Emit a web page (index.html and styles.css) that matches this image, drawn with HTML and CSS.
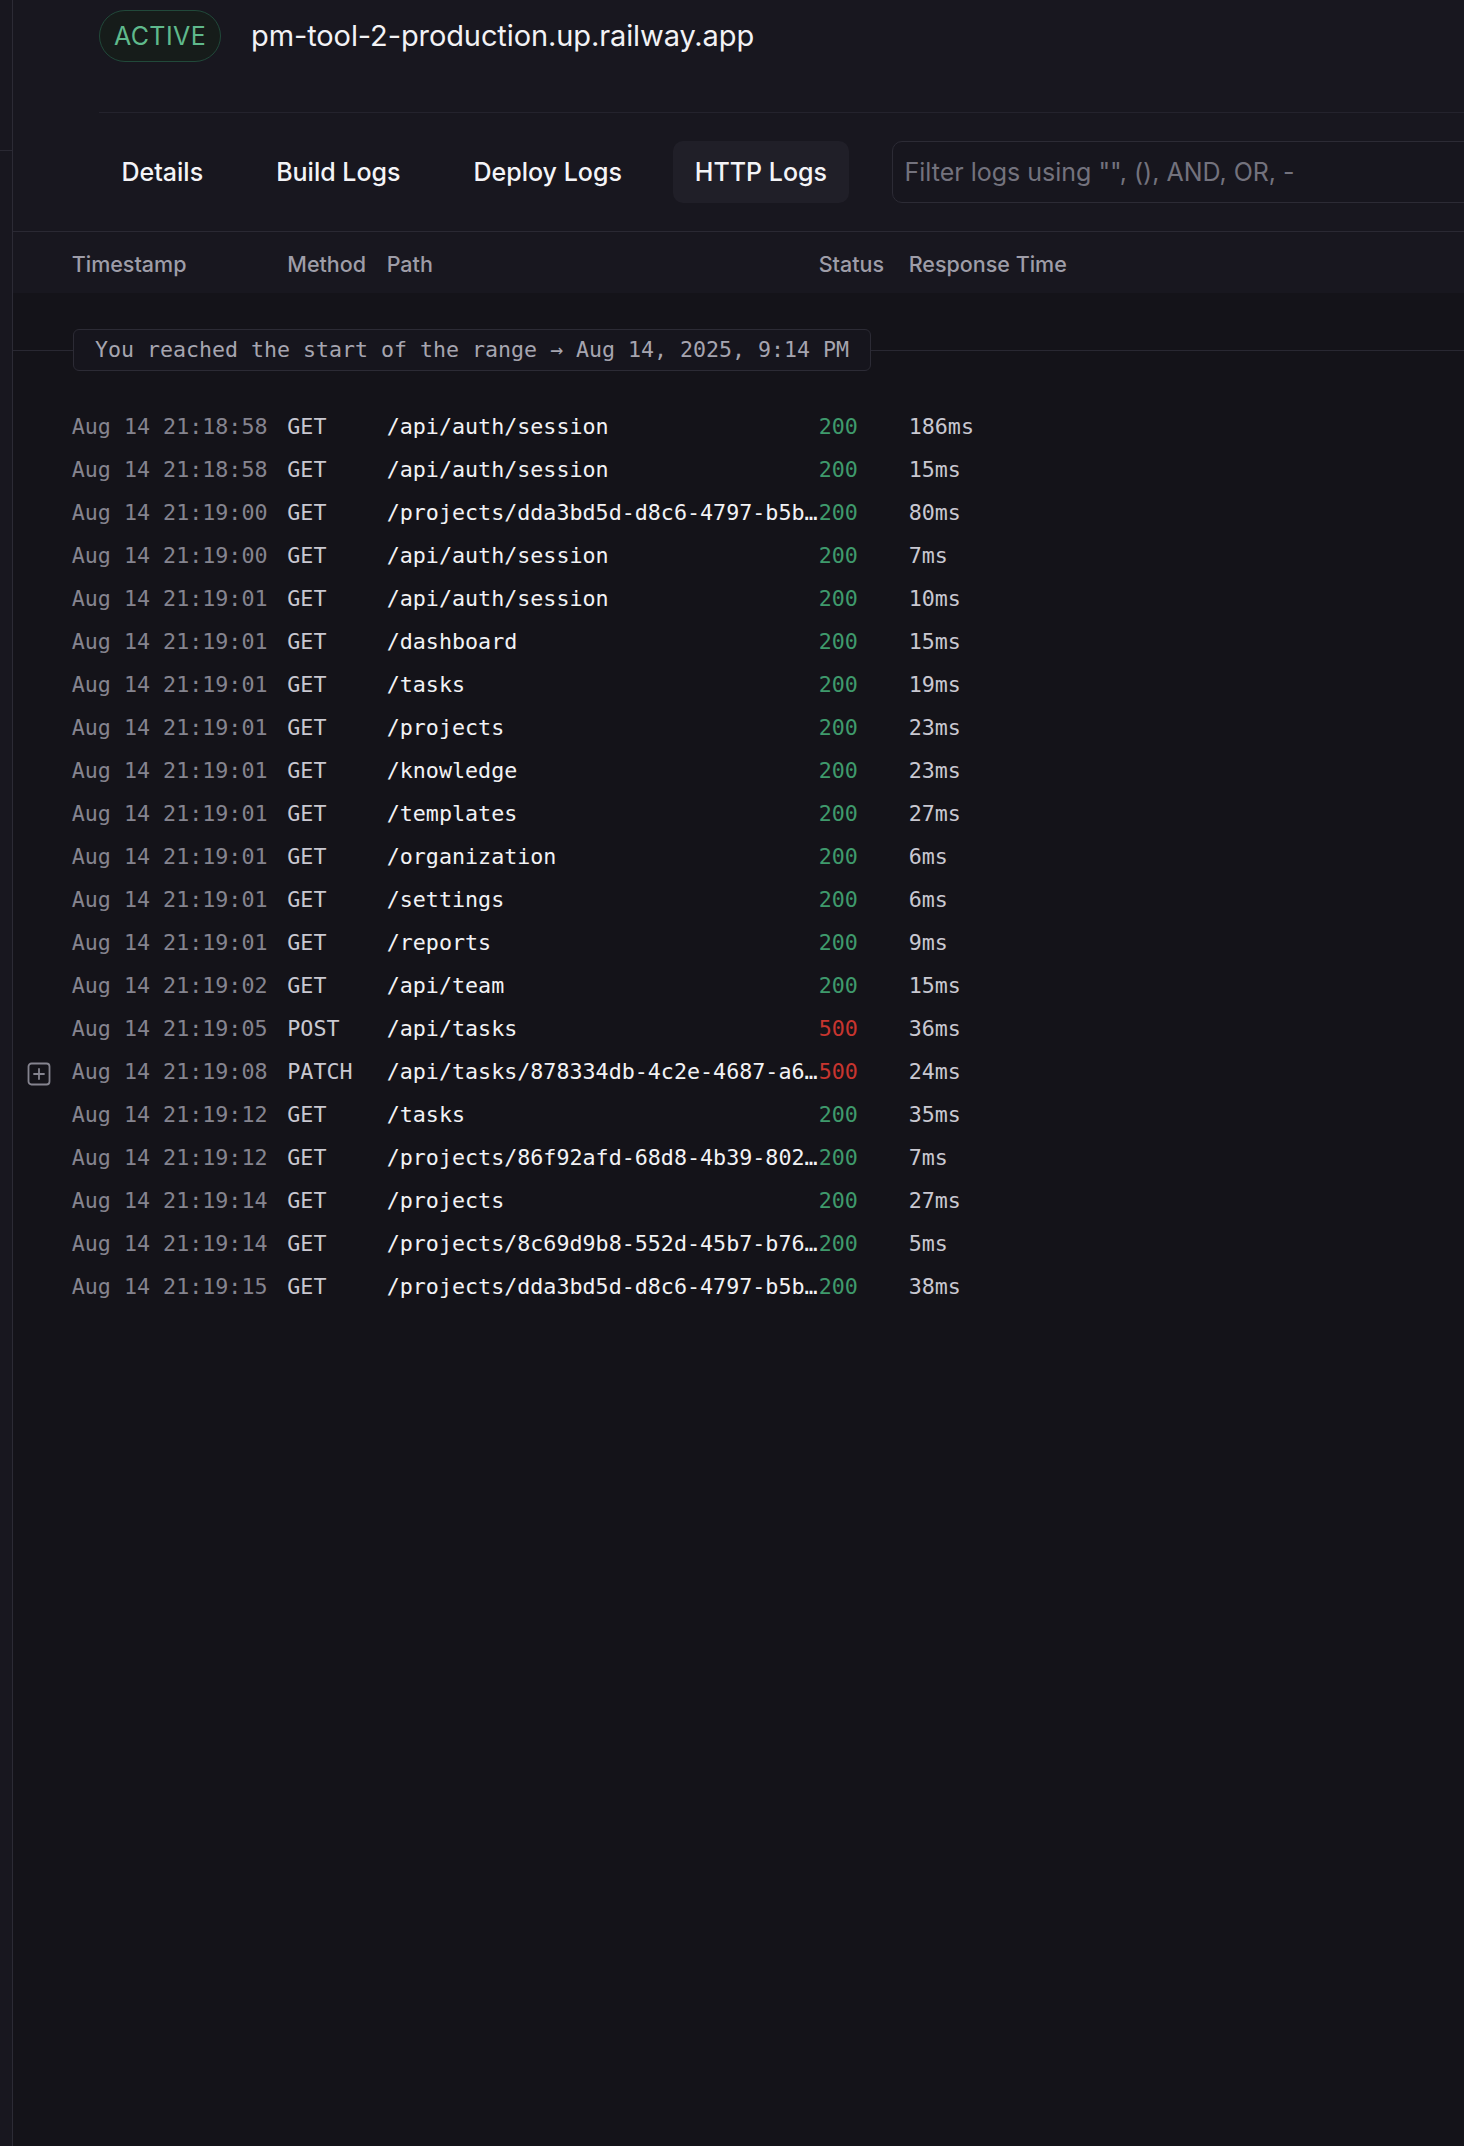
FILE: index.html
```html
<!DOCTYPE html>
<html lang="en">
<head>
<meta charset="utf-8">
<title>HTTP Logs</title>
<link rel="stylesheet" href="styles.css">
</head>
<body>
<div class="app">
  <aside class="side"><div class="side-item"></div></aside>
  <main class="panel">
    <header class="top">
      <div class="domain-row">
        <span class="pill">ACTIVE</span>
        <span class="domain">pm-tool-2-production.up.railway.app</span>
      </div>
      <nav class="tabs-row">
        <span class="tab">Details</span>
        <span class="tab">Build Logs</span>
        <span class="tab">Deploy Logs</span>
        <span class="tab active">HTTP Logs</span>
        <input class="filter" type="text" placeholder="Filter logs using &quot;&quot;, (), AND, OR, -">
      </nav>
    </header>
    <section class="logs">
      <div class="log-head grid">
        <span></span>
        <span>Timestamp</span>
        <span>Method</span>
        <span>Path</span>
        <span>Status</span>
        <span>Response Time</span>
      </div>
      <div class="range">
        <span class="range-line short"></span>
        <span class="range-box">You reached the start of the range → Aug 14, 2025, 9:14 PM</span>
        <span class="range-line"></span>
      </div>
      <div class="rows">
        <div class="row grid"><span></span><span class="ts">Aug 14 21:18:58</span><span class="m">GET</span><span class="p">/api/auth/session</span><span class="s ok">200</span><span class="r">186ms</span></div>
        <div class="row grid"><span></span><span class="ts">Aug 14 21:18:58</span><span class="m">GET</span><span class="p">/api/auth/session</span><span class="s ok">200</span><span class="r">15ms</span></div>
        <div class="row grid"><span></span><span class="ts">Aug 14 21:19:00</span><span class="m">GET</span><span class="p">/projects/dda3bd5d-d8c6-4797-b5b1-6a2c9e0f4d71</span><span class="s ok">200</span><span class="r">80ms</span></div>
        <div class="row grid"><span></span><span class="ts">Aug 14 21:19:00</span><span class="m">GET</span><span class="p">/api/auth/session</span><span class="s ok">200</span><span class="r">7ms</span></div>
        <div class="row grid"><span></span><span class="ts">Aug 14 21:19:01</span><span class="m">GET</span><span class="p">/api/auth/session</span><span class="s ok">200</span><span class="r">10ms</span></div>
        <div class="row grid"><span></span><span class="ts">Aug 14 21:19:01</span><span class="m">GET</span><span class="p">/dashboard</span><span class="s ok">200</span><span class="r">15ms</span></div>
        <div class="row grid"><span></span><span class="ts">Aug 14 21:19:01</span><span class="m">GET</span><span class="p">/tasks</span><span class="s ok">200</span><span class="r">19ms</span></div>
        <div class="row grid"><span></span><span class="ts">Aug 14 21:19:01</span><span class="m">GET</span><span class="p">/projects</span><span class="s ok">200</span><span class="r">23ms</span></div>
        <div class="row grid"><span></span><span class="ts">Aug 14 21:19:01</span><span class="m">GET</span><span class="p">/knowledge</span><span class="s ok">200</span><span class="r">23ms</span></div>
        <div class="row grid"><span></span><span class="ts">Aug 14 21:19:01</span><span class="m">GET</span><span class="p">/templates</span><span class="s ok">200</span><span class="r">27ms</span></div>
        <div class="row grid"><span></span><span class="ts">Aug 14 21:19:01</span><span class="m">GET</span><span class="p">/organization</span><span class="s ok">200</span><span class="r">6ms</span></div>
        <div class="row grid"><span></span><span class="ts">Aug 14 21:19:01</span><span class="m">GET</span><span class="p">/settings</span><span class="s ok">200</span><span class="r">6ms</span></div>
        <div class="row grid"><span></span><span class="ts">Aug 14 21:19:01</span><span class="m">GET</span><span class="p">/reports</span><span class="s ok">200</span><span class="r">9ms</span></div>
        <div class="row grid"><span></span><span class="ts">Aug 14 21:19:02</span><span class="m">GET</span><span class="p">/api/team</span><span class="s ok">200</span><span class="r">15ms</span></div>
        <div class="row grid"><span></span><span class="ts">Aug 14 21:19:05</span><span class="m">POST</span><span class="p">/api/tasks</span><span class="s err">500</span><span class="r">36ms</span></div>
        <div class="row grid"><span class="exp"><svg width="24" height="24" viewBox="0 0 24 24" fill="none" stroke="#85848f" stroke-width="1.8" stroke-linecap="round"><rect x="1.5" y="1.5" width="21" height="21" rx="3"/><path d="M12 7v10M7 12h10"/></svg></span><span class="ts">Aug 14 21:19:08</span><span class="m">PATCH</span><span class="p">/api/tasks/878334db-4c2e-4687-a6d2-91b3f0c5e8a4</span><span class="s err">500</span><span class="r">24ms</span></div>
        <div class="row grid"><span></span><span class="ts">Aug 14 21:19:12</span><span class="m">GET</span><span class="p">/tasks</span><span class="s ok">200</span><span class="r">35ms</span></div>
        <div class="row grid"><span></span><span class="ts">Aug 14 21:19:12</span><span class="m">GET</span><span class="p">/projects/86f92afd-68d8-4b39-8021-c4e7a9d3b615</span><span class="s ok">200</span><span class="r">7ms</span></div>
        <div class="row grid"><span></span><span class="ts">Aug 14 21:19:14</span><span class="m">GET</span><span class="p">/projects</span><span class="s ok">200</span><span class="r">27ms</span></div>
        <div class="row grid"><span></span><span class="ts">Aug 14 21:19:14</span><span class="m">GET</span><span class="p">/projects/8c69d9b8-552d-45b7-b76e-0d4f2a8c9b31</span><span class="s ok">200</span><span class="r">5ms</span></div>
        <div class="row grid"><span></span><span class="ts">Aug 14 21:19:15</span><span class="m">GET</span><span class="p">/projects/dda3bd5d-d8c6-4797-b5b1-6a2c9e0f4d71</span><span class="s ok">200</span><span class="r">38ms</span></div>
      </div>
    </section>
  </main>
</div>
</body>
</html>
```

FILE: styles.css
```css
* { box-sizing: border-box; }
html, body {
  margin: 0;
  padding: 0;
  height: 100%;
  background: #141319;
  overflow: hidden;
}
body {
  font-family: Inter, "Noto Sans", sans-serif;
  color: #f2f2f5;
}
.app {
  display: flex;
  min-height: 2146px;
  width: 1464px;
  overflow: hidden;
}
.side {
  width: 12px;
  flex: 0 0 12px;
  background: #18171f;
}
.side-item {
  height: 151px;
  border-bottom: 1px solid #2a2933;
}
.panel {
  flex: 1 1 auto;
  min-width: 0;
  border-left: 1px solid #2c2b35;
  background: #141319;
  display: flex;
  flex-direction: column;
}
.top {
  background: #18171f;
}
.domain-row {
  margin-left: 86px;
  height: 113px;
  padding-top: 10px;
  border-bottom: 1px solid #24232d;
  display: flex;
  align-items: flex-start;
  gap: 30px;
}
.pill {
  height: 52px;
  width: 122px;
  border-radius: 26px;
  border: 1px solid #21493a;
  background: #161c1a;
  color: #5fb98c;
  font-size: 25px;
  font-weight: 400;
  letter-spacing: 0.4px;
  display: flex;
  align-items: center;
  justify-content: center;
}
.domain {
  font-size: 29px;
  line-height: 52px;
  color: #f2f2f5;
  letter-spacing: -0.1px;
}
.tabs-row {
  display: flex;
  align-items: center;
  gap: 30px;
  padding: 28px 0 28px 86px;
  border-bottom: 1px solid #2a2933;
}
.tab {
  height: 62px;
  padding: 0 21.5px;
  border-radius: 10px;
  font-size: 25px;
  font-weight: 500;
  color: #f4f4f7;
  display: flex;
  align-items: center;
  white-space: nowrap;
}
.tab:first-child {
  margin-left: 1px;
}
.tab.active {
  background: #201f28;
}
.filter {
  margin-left: 13px;
  flex: 0 0 720px;
  height: 62px;
  border: 1px solid #2c2b35;
  border-radius: 10px;
  background: #17161e;
  padding: 0 12px;
  font-family: Inter, "Noto Sans", sans-serif;
  font-size: 25px;
  color: #f2f2f5;
  outline: none;
}
.filter::placeholder {
  color: #73727d;
}
.grid {
  display: grid;
  grid-template-columns: 58.7px 215.6px 99.4px 432px 90px 1fr;
  align-items: center;
}
.log-head {
  height: 61px;
  padding-top: 2px;
  background: #18171f;
  font-size: 21.5px;
  font-weight: 500;
  color: #9e9da8;
  white-space: nowrap;
}
.range {
  display: flex;
  align-items: center;
  padding: 36px 0 34px;
}
.range-line {
  flex: 1 1 auto;
  border-top: 1px solid #292832;
}
.range-line.short {
  flex: 0 0 60px;
}
.range-box {
  height: 42px;
  padding: 0 21px;
  border: 1px solid #2c2b35;
  border-radius: 6px;
  background: #16151d;
  font-family: "DejaVu Sans Mono", "Liberation Mono", monospace;
  font-size: 21.6px;
  line-height: 40px;
  color: #a6a5b0;
  white-space: nowrap;
}
.row {
  height: 43px;
  font-family: "DejaVu Sans Mono", "Liberation Mono", monospace;
  font-size: 21.7px;
  white-space: nowrap;
}
.ts { color: #85848f; }
.m { color: #c9c8d1; }
.p {
  color: #f2f2f5;
  overflow: hidden;
  text-overflow: ellipsis;
}
.s.ok { color: #3f9a6c; }
.s.err { color: #c8352f; }
.r { color: #c9c8d1; }
.exp {
  display: flex;
  align-items: center;
  padding-left: 14px;
  padding-top: 4px;
}
.exp svg { display: block; }
```
